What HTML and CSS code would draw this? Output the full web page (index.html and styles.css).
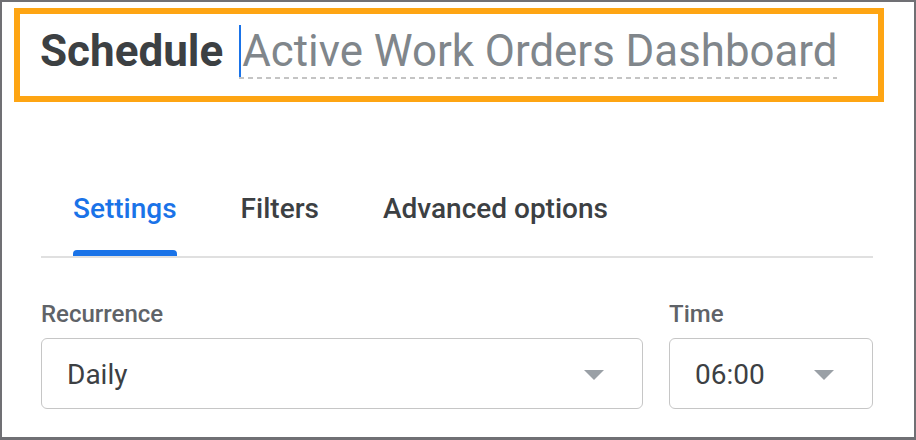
FILE: index.html
```html
<!DOCTYPE html>
<html lang="en">
<head>
<meta charset="utf-8">
<title>Schedule</title>
<link rel="stylesheet" href="styles.css">
</head>
<body>
<div class="frame">
  <header class="title-bar">
    <h1 class="title">Schedule</h1>
    <div class="name-input">
      <span class="caret"></span>
      <span class="name-text">Active Work Orders Dashboard</span>
    </div>
  </header>
  <main class="content">
    <nav class="tabs">
      <div class="tab active"><span class="tab-label"><span class="tab-text">Settings</span><span class="tab-bar"></span></span></div>
      <div class="tab"><span class="tab-label"><span class="tab-text">Filters</span><span class="tab-bar"></span></span></div>
      <div class="tab"><span class="tab-label"><span class="tab-text">Advanced options</span><span class="tab-bar"></span></span></div>
    </nav>
    <div class="fields">
      <div class="field">
        <div class="field-label">Recurrence</div>
        <div class="select">
          <span class="select-value">Daily</span>
          <svg class="arrow" width="20" height="10" viewBox="0 0 20 10"><polygon points="0,0 20,0 10,10" fill="#9aa0a6"/></svg>
        </div>
      </div>
      <div class="field">
        <div class="field-label">Time</div>
        <div class="select">
          <span class="select-value">06:00</span>
          <svg class="arrow" width="20" height="10" viewBox="0 0 20 10"><polygon points="0,0 20,0 10,10" fill="#9aa0a6"/></svg>
        </div>
      </div>
    </div>
  </main>
</div>
</body>
</html>
```

FILE: styles.css
```css
* { box-sizing: border-box; }
html, body { margin: 0; padding: 0; background: #fff; }
body { font-family: Roboto, "Liberation Sans", Arial, sans-serif; }

.frame {
  width: 916px;
  height: 440px;
  border: 2px solid #707074;
  border-bottom-width: 3px;
  background: #fff;
  overflow: hidden;
}

.title-bar {
  margin: 6px 30px 0 12px;
  height: 94px;
  border: 6px solid #fea513;
  display: flex;
  align-items: flex-start;
  padding: 11px 0 0 20px;
  gap: 16px;
}

.title {
  margin: 0;
  font-size: 44px;
  line-height: 52px;
  font-weight: 700;
  color: #3c4043;
}

.name-input {
  display: flex;
  align-items: flex-start;
  height: 54px;
  background: repeating-linear-gradient(to right, #c4c4c4 0 5px, transparent 5px 9px) left bottom / 100% 2px no-repeat;
}

.caret {
  width: 2px;
  height: 52px;
  background: #1a73e8;
}

.name-text {
  margin-left: 1px;
  font-size: 43.8px;
  line-height: 52px;
  color: #80868b;
}

.content {
  padding: 0 41px 0 39px;
}

.tabs {
  display: flex;
  margin-top: 91px;
  border-bottom: 2px solid #e0e0e0;
}

.tab {
  padding: 0 32px;
}

.tab-label {
  display: flex;
  flex-direction: column;
}

.tab-text {
  font-size: 28px;
  line-height: 32px;
  font-weight: 500;
  color: #3c4043;
}

.tab-bar {
  margin-top: 25px;
  height: 6px;
  border-radius: 4px 4px 0 0;
}

.tab.active .tab-text { color: #1a73e8; }
.tab.active .tab-bar { background: #1a73e8; }

.fields {
  display: grid;
  grid-template-columns: 1fr 204px;
  column-gap: 26px;
  margin-top: 42px;
}

.field-label {
  font-size: 24px;
  line-height: 28px;
  font-weight: 500;
  color: #5f6368;
  margin-bottom: 10px;
}

.select {
  height: 71px;
  border: 1px solid #c6c6c6;
  border-radius: 6px;
  display: flex;
  align-items: center;
  justify-content: space-between;
  padding: 2px 38px 0 25px;
}

.select-value {
  font-size: 28px;
  line-height: 32px;
  color: #3c4043;
}

.arrow { display: block; }
```
